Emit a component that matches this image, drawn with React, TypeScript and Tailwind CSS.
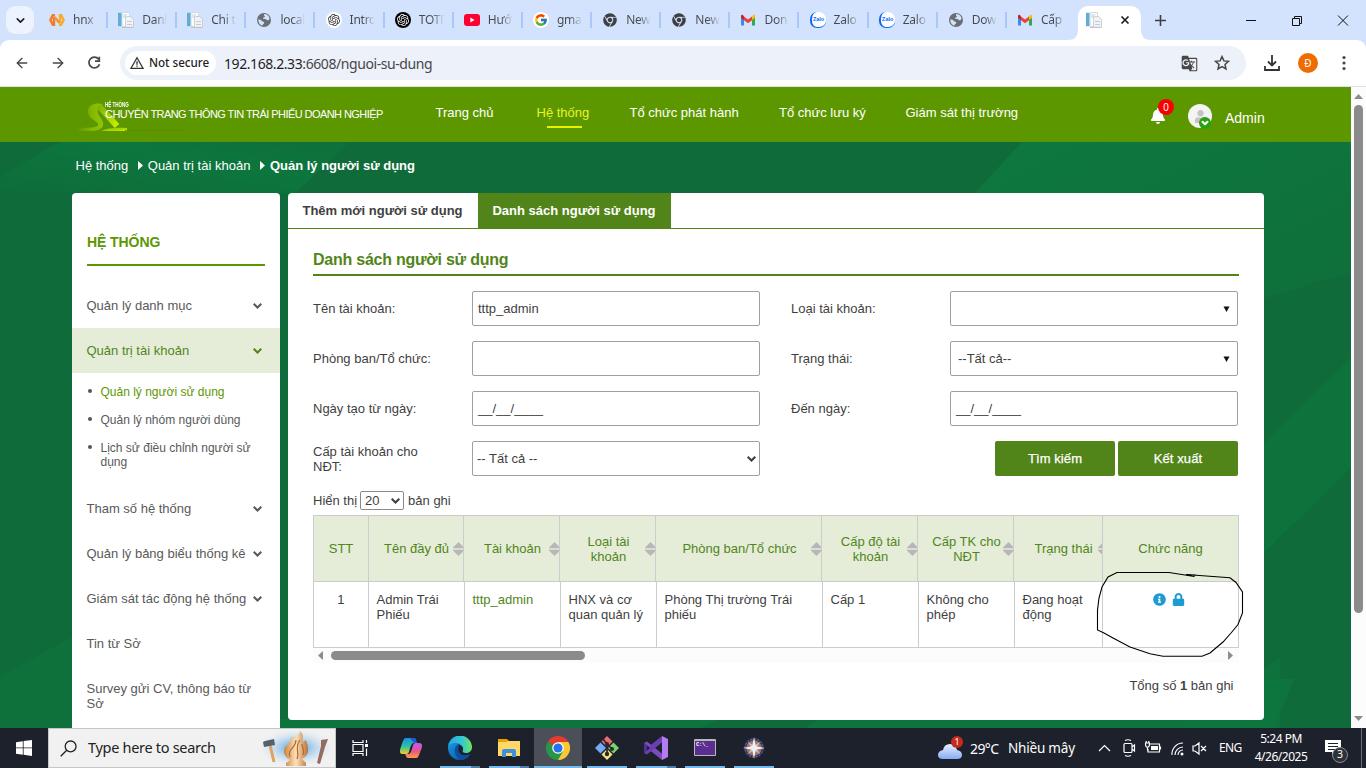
import type { ReactNode } from "react";
import { FcGoogle } from "react-icons/fc";
import { SiOpenai } from "react-icons/si";
import { FaInfoCircle, FaLock, FaBell, FaChrome, FaUser } from "react-icons/fa";
import { MdGTranslate } from "react-icons/md";
import { ChevronDown, ArrowLeft, ArrowRight } from "lucide-react";

function DocIcon() {
  return (
    <svg width="16" height="16" viewBox="0 0 16 16">
      <path d="M4 .5h7.500v14H4z" fill="#fbfcfd" stroke="#cdd3d8" strokeWidth=".8" />
      <path d="M0 .8h3.500v13.400H0z" fill="#62add6" />
      <path d="M5 3h4M5 5h2" stroke="#c3d3df" />
      <path d="M7.500 4.500h5l3 3v7.800h-8z" fill="#f1f3f4" stroke="#c0c6ca" strokeWidth=".8" />
      <path d="M9 9.500h5M9 12.500h5" stroke="#c6cbcf" />
      <path d="M4 15.500h11" stroke="#b8bdc1" strokeWidth=".8" />
    </svg>
  );
}

function HnxIcon() {
  return (
    <svg width="16" height="16" viewBox="0 0 16 16" fill="none" strokeWidth="2.400">
      <path d="M6 3.200H3.800L1.400 8l2.400 4.800H5V5" stroke="#f47b2a" />
      <path d="M10 12.800h2.200L14.600 8l-2.400-4.800H11V11" stroke="#fbab2c" />
      <path d="m5.500 5 5 6" stroke="#f7922b" />
    </svg>
  );
}

function GlobeIcon() {
  return (
    <svg width="16" height="16" viewBox="0 0 16 16">
      <circle cx="8" cy="8" r="7" fill="#6b6f73" />
      <path d="M2.300 7.600c1.600 0 2.500.2 3.700 1.400.7.800 2 .4 2.200 1.500.2 1-.8 1.400-1.400 2l-.5 1.200C3.700 13 2.300 10.500 2.300 7.600zM8 2.300h2.200c1.600.7 3 2.200 3.400 4.200-.5 1.500-1.200 2-2.400 1.700L9.500 7 7 6.800c0-1 .3-1.400 1.300-1.600 1-.2.700-1.400-.3-1.500z" fill="#d3e3fd" />
    </svg>
  );
}

function GmailIcon() {
  return (
    <svg width="16" height="16" viewBox="0 0 16 16">
      <path d="M1 4v9.500h3V7z" fill="#4285f4" />
      <path d="M15 4v9.500h-3V7z" fill="#34a853" />
      <path d="M12 4.500 13.200 3c1-.6 1.800.2 1.800 1.200v1.600l-3 2.300z" fill="#fbbc04" />
      <path d="M4 8.200V4.400l4 3 4-3v3.800l-4 3z" fill="#ea4335" />
      <path d="M1 5.800V4.200C1 3 2 2.400 2.800 3L4 4.300v3.800z" fill="#c5221f" />
    </svg>
  );
}

function ZaloIcon() {
  return (
    <span className="flex size-4 items-center justify-center rounded-[7px] border-b border-l-2 border-[#0d68f2] bg-white font-['Liberation_Sans'] text-[5.500px] font-bold text-[#0d68f2]">
      Zalo
    </span>
  );
}

function YoutubeIcon() {
  return (
    <svg width="16" height="16" viewBox="0 0 16 16">
      <rect y="2" width="16" height="12" rx="3" fill="#f03" />
      <path d="m6.300 5.500 4.200 2.500-4.200 2.500z" fill="#fff" />
    </svg>
  );
}

const doc = <DocIcon />;
const tabs: { icon: ReactNode; text: string }[] = [
  { icon: <HnxIcon />, text: "hnx ." },
  { icon: doc, text: "Danh" },
  { icon: doc, text: "Chi ti" },
  { icon: <GlobeIcon />, text: "local" },
  { icon: <span className="flex size-4 items-center justify-center rounded-full bg-white"><SiOpenai size={12} color="#333" /></span>, text: "Intro" },
  { icon: <span className="flex size-4 items-center justify-center rounded-full bg-black"><SiOpenai size={12} color="#fff" /></span>, text: "TOTP" },
  { icon: <YoutubeIcon />, text: "Hướ" },
  { icon: <span className="flex size-4 items-center justify-center rounded-full bg-white"><FcGoogle size={14} /></span>, text: "gmai" },
  { icon: <FaChrome size={14} color="#3c4043" />, text: "New" },
  { icon: <FaChrome size={14} color="#3c4043" />, text: "New" },
  { icon: <GmailIcon />, text: "Don" },
  { icon: <ZaloIcon />, text: "Zalo" },
  { icon: <ZaloIcon />, text: "Zalo" },
  { icon: <GlobeIcon />, text: "Dow" },
  { icon: <GmailIcon />, text: "Cấp" },
];

function TabStrip() {
  return (
    <div className="flex h-10 items-stretch bg-[#d3e3fd]">
      <div className="mt-1.5 ml-1.5 flex size-7 shrink-0 items-center justify-center rounded-[9px] bg-[#ecf3fe]">
        <ChevronDown size={13} strokeWidth={3} color="#1f1f1f" />
      </div>
      <div className="ml-[5px] flex">
        {tabs.map((t, i) => (
          <div key={i} className="flex w-[69.150px] shrink-0 items-center pl-[10px]">
            <span className="flex w-4 shrink-0 justify-center">{t.icon}</span>
            <span className="ml-2 w-[25px] shrink-0 overflow-hidden bg-linear-to-r from-[#45494d] from-50% to-[#d3e3fd] bg-clip-text text-[12px] tracking-[-0.250px] whitespace-nowrap text-transparent">
              {t.text}
            </span>
            {i < tabs.length - 1 && <span className="ml-[8px] h-4 w-0.5 shrink-0 bg-[#a8c7fa]" />}
          </div>
        ))}
      </div>
      <svg width="10" height="40" viewBox="0 0 10 40" className="-ml-[8px] shrink-0">
        <path d="M0 40h10V30q0 10-10 10z" fill="#fff" />
      </svg>
      <div className="mt-1.5 flex w-[63px] shrink-0 items-center rounded-t-[10px] bg-white pb-1.5 pl-2">
        {doc}
        <svg width="10" height="10" viewBox="0 0 10 10" className="ml-[18px]">
          <path d="m1.500 1.500 7 7m0-7-7 7" stroke="#1f1f1f" strokeWidth="1.700" />
        </svg>
      </div>
      <svg width="10" height="40" viewBox="0 0 10 40" className="shrink-0">
        <path d="M0 30v10h10Q0 40 0 30z" fill="#fff" />
      </svg>
      <div className="flex flex-1 items-center pl-[4px]">
        <svg width="11" height="11" viewBox="0 0 11 11">
          <path d="M5.500 0v11M0 5.500h11" stroke="#3c4043" strokeWidth="1.600" />
        </svg>
        <svg width="103" height="11" viewBox="0 0 103 11" className="mr-[17px] ml-auto shrink-0" fill="none" stroke="#111" strokeWidth="1">
          <path d="M0 5.500h10M46.500 3.500h7v7h-7zM48.500 3.500v-2h7v7h-2M92 .5l10 10m0-10-10 10" />
        </svg>
      </div>
    </div>
  );
}

function Toolbar() {
  return (
    <div className="bg-[#d3e3fd]">
      <div className="flex h-[47px] items-center rounded-t-[9px] border-b border-[#dfe1e5] bg-white">
        <ArrowLeft size={16} strokeWidth={2} color="#474747" className="ml-[14px]" />
        <ArrowRight size={16} strokeWidth={2} color="#474747" className="ml-[20px]" />
        <svg width="16" height="16" viewBox="0 0 16 16" className="ml-[20px]" fill="none" stroke="#474747" strokeWidth="1.700">
          <path d="M12.600 4.200a5.400 5.400 0 1 0 .9 5M13.300 1.800v4.300H9" />
        </svg>
        <div className="ml-[18px] flex h-[34px] w-[1126px] items-center rounded-full bg-[#edf1fa] pl-[5px]">
          <div className="flex h-6 w-[91px] items-center rounded-full bg-white pl-[5px]">
            <svg width="14" height="14" viewBox="0 0 14 14" fill="none" stroke="#333" strokeWidth="1.300">
              <path d="M7 1.700 13 12.300H1zM7 5.200v3.500M7 9.500v1.300" />
            </svg>
            <span className="ml-[5px] text-[11.700px] font-medium tracking-[-0.050px] whitespace-nowrap text-[#1f1f1f]">Not secure</span>
          </div>
          <span className="ml-[8px] text-[14px] tracking-[-0.420px] text-[#474747]">
            <span className="text-[#1f1f1f]">192.168.2.33</span>:6608/nguoi-su-dung
          </span>
          <MdGTranslate size={17} color="#474747" className="ml-auto" />
          <svg width="16" height="16" viewBox="0 0 16 16" className="mr-4 ml-4" fill="none" stroke="#474747" strokeWidth="1.500">
            <path d="m8 1.600 1.900 4.300 4.600.4-3.500 3.100 1 4.600L8 11.600l-4 2.400 1-4.600L1.500 6.300l4.600-.4z" />
          </svg>
        </div>
        <svg width="16" height="16" viewBox="0 0 16 16" className="ml-[18px]" fill="none" stroke="#333" strokeWidth="1.800">
          <path d="M8 0v10M4 6.500 8 10.500l4-4M1 11v4h14v-4" />
        </svg>
        <span className="ml-[18px] flex size-5 items-center justify-center rounded-full bg-[#ef6c00] text-[10px] text-white">Đ</span>
        <svg width="4" height="16" viewBox="0 0 4 16" className="ml-6" fill="#474747">
          <circle cx="2" cy="2.500" r="1.600" /><circle cx="2" cy="8" r="1.600" /><circle cx="2" cy="13.500" r="1.600" />
        </svg>
      </div>
    </div>
  );
}

function SiteHeader() {
  return (
    <header className="flex h-[55px] shrink-0 border-b border-[#5a9110] bg-[#5d9700] text-[13px] text-white">
      <div className="relative ml-[75px] w-[360.500px]">
        <svg width="112" height="30" viewBox="0 0 112 30" className="absolute top-[16px] left-0" fill="none">
          <defs>
            <linearGradient id="sweep" x1="0" x2="1"><stop stopColor="#5d9700" /><stop offset=".6" stopColor="#86b900" /><stop offset="1" stopColor="#8fc40a" /></linearGradient>
            <linearGradient id="tail" x1="0" x2="1" y1="0" y2="1"><stop stopColor="#7fb400" /><stop offset="1" stopColor="#c8ee00" /></linearGradient>
          </defs>
          <path d="M28 1C20-1 12 2 13 9c1 7 9 9 10 12 1 4-8 4-21 4v3h12c9 0 15-2 14-8-1-5-7-9-5-14 1-2 3-3 5-5z" fill="url(#sweep)" />
          <path d="m24 3 18 20" stroke="url(#tail)" strokeWidth="6" />
          <path d="M26 28c5-3 14-4 26-3v3z" fill="url(#tail)" />
          <path d="M50 27.500h60" stroke="#548e00" strokeWidth=".7" />
        </svg>
        <span className="absolute top-[13px] left-[30px] origin-left scale-x-[0.600] text-[7.500px] leading-[10px] font-bold whitespace-nowrap">HỆ THỐNG</span>
        <span className="absolute top-[20px] left-[30px] text-[11px] leading-[14px] tracking-[-0.560px] whitespace-nowrap">CHUYÊN TRANG THÔNG TIN TRÁI PHIẾU DOANH NGHIỆP</span>
      </div>
      <nav className="flex pt-[17px] leading-[17px] whitespace-nowrap">
        <a className="w-[101px]">Trang chủ</a>
        <a className="flex w-[93px] flex-col items-start text-[#e5f52a]">
          Hệ thống
          <span className="mt-[5px] ml-[10px] h-[2px] w-[35px] bg-[#e8f200]" />
        </a>
        <a className="w-[149.500px]">Tổ chức phát hành</a>
        <a className="w-[126.500px]">Tổ chức lưu ký</a>
        <a className="w-[113px]">Giám sát thị trường</a>
      </nav>
      <div className="relative mt-[21px] ml-[131px] h-4 w-4">
        <FaBell size={16} color="#fff" />
        <span className="absolute -top-[9px] left-[8.500px] flex size-4 items-center justify-center rounded-full bg-[#fb0000] text-[10px]">0</span>
      </div>
      <div className="relative mt-[17px] ml-[22.500px] size-6">
        <div className="flex size-6 items-center justify-center overflow-hidden rounded-full bg-[#f4f4f4]">
          <FaUser size={13} color="#c4c4c4" />
        </div>
        <span className="absolute top-[13px] left-[11px] flex size-3 items-center justify-center rounded-full bg-[#2ba015]">
          <ChevronDown size={10} strokeWidth={5} color="#fff" />
        </span>
      </div>
      <span className="mt-[23px] ml-[13px] text-[14px] leading-[17px]">Admin</span>
    </header>
  );
}

function Chevron() {
  return (
    <svg width="9" height="6" viewBox="0 0 9 6" fill="none" stroke="currentColor" strokeWidth="2.100">
      <path d="m.7.8 3.800 3.700L8.300.8" />
    </svg>
  );
}

function MenuItem({ text, arrow = false, active = false }: { text: string; arrow?: boolean; active?: boolean }) {
  return (
    <div className={`flex h-[45px] shrink-0 items-center justify-between pr-[18px] pl-[14.500px] ${active ? "bg-[#e5edd9] text-[#528519]" : ""}`}>
      <span className="whitespace-nowrap">{text}</span>
      {arrow && <Chevron />}
    </div>
  );
}

function SubItem({ text, active = false }: { text: string; active?: boolean }) {
  return (
    <li className="flex">
      <span className="mt-[4px] mr-[8.500px] ml-[1.500px] size-1 shrink-0 rounded-full bg-[#555]" />
      <span className={active ? "text-[#5d9700]" : ""}>{text}</span>
    </li>
  );
}

function Sidebar() {
  return (
    <aside className="flex w-[208px] shrink-0 flex-col overflow-hidden rounded-t bg-white text-[13px] leading-[15px] text-[#595959]">
      <div className="mx-[15px] mt-[40px] mb-[17px] flex h-[33px] shrink-0 items-start border-b-2 border-[#5d9700] pt-[1px] text-[14px] leading-[17px] font-bold tracking-[-0.080px] text-[#5d9700]">HỆ THỐNG</div>
      <MenuItem text="Quản lý danh mục" arrow />
      <MenuItem text="Quản trị tài khoản" arrow active />
      <ul className="flex h-[113px] shrink-0 flex-col gap-[14px] pt-[12px] pr-[20px] pl-[14.500px] text-[12px] leading-[14px]">
        <SubItem text="Quản lý người sử dụng" active />
        <SubItem text="Quản lý nhóm người dùng" />
        <SubItem text="Lịch sử điều chỉnh người sử dụng" />
      </ul>
      <MenuItem text="Tham số hệ thống" arrow />
      <MenuItem text="Quản lý bảng biểu thống kê" arrow />
      <MenuItem text="Giám sát tác động hệ thống" arrow />
      <MenuItem text="Tin từ Sở" />
      <div className="pt-[15px] pr-[20px] pl-[14.500px]">Survey gửi CV, thông báo từ Sở</div>
    </aside>
  );
}

function Field({ label, children }: { label: string; children?: ReactNode }) {
  return (
    <div className="flex h-[35px] items-center">
      <span className="w-[159px] shrink-0 pr-[38px]">{label}</span>
      <div className="flex h-[35px] w-[288px] items-center rounded-[2px] border border-[#a0a0a0] px-[5px]">{children}</div>
    </div>
  );
}

function Triangle() {
  return (
    <svg width="7" height="6" viewBox="0 0 7 6" className="mr-[2.500px] ml-auto"><path d="M.5.500h6L3.500 6z" fill="#111" /></svg>
  );
}

function SortIcon() {
  return (
    <svg width="11" height="14" viewBox="0 0 11 14" fill="#b7b7b7" className="-mr-px shrink-0">
      <path d="M5.500 0 11 5.500v.8H0v-.8zM0 7.700h11v.8L5.500 14 0 8.500z" />
    </svg>
  );
}

function HeadCell({ text, className, sort = true }: { text: string; className: string; sort?: boolean }) {
  return (
    <div className={`flex shrink-0 items-center overflow-hidden border-r border-[#ccc] ${className}`}>
      <span className="flex-1 text-center">{text}</span>
      {sort && <SortIcon />}
    </div>
  );
}

function Grid() {
  return (
    <div className="mt-[5px] w-[926px]">
      <div className="flex h-[67px] border border-r-0 border-[#ccc] bg-[#e5edd9] text-[#528519]">
        <HeadCell text="STT" className="w-[55px]" sort={false} />
        <HeadCell text="Tên đầy đủ" className="w-[95px] pl-[11px]" />
        <HeadCell text="Tài khoản" className="w-[96px] pl-[12px]" />
        <HeadCell text="Loại tài khoản" className="w-[96px] pl-[12px] [&>span]:px-3" />
        <HeadCell text="Phòng ban/Tổ chức" className="w-[166px] pl-[12px]" />
        <HeadCell text="Cấp độ tài khoản" className="w-[96px] pl-[12px] [&>span]:px-1" />
        <HeadCell text="Cấp TK cho NĐT" className="w-[96px] pl-[12px]" />
        <HeadCell text="Trạng thái" className="w-[89px] pl-[13px] [&>span]:-mr-0.5 [&>span]:whitespace-nowrap [&>svg]:-mr-[7px]" />
        <HeadCell text="Chức năng" className="w-[136px]" sort={false} />
      </div>
      <div className="flex h-[66px] border-b border-l border-[#ccc] *:shrink-0 *:border-r *:border-[#ccc] *:pt-[10px] *:pl-[7.500px]">
        <div className="w-[55px] pr-[8px] text-center">1</div>
        <div className="w-[96px]">Admin Trái Phiếu</div>
        <div className="w-[96px] text-[#528519]">tttp_admin</div>
        <div className="w-[96px]">HNX và cơ quan quản lý</div>
        <div className="w-[166px] pr-4">Phòng Thị trường Trái phiếu</div>
        <div className="w-[96px]">Cấp 1</div>
        <div className="w-[96px] pr-4">Không cho phép</div>
        <div className="w-[88px] pr-4">Đang hoạt động</div>
        <div className="flex w-[136px] gap-[6px] text-[#1e9bd1]">
          <FaInfoCircle size={13} className="mt-px ml-[42.500px]" />
          <FaLock size={13} className="mt-px" />
        </div>
      </div>
      <div className="flex h-[15px] items-center bg-[#fcfcfc] pl-[5px]">
        <svg width="5" height="9" viewBox="0 0 5 9"><path d="M5 0v9L0 4.500z" fill="#8b8b8b" /></svg>
        <div className="ml-[8px] h-[9px] w-[254px] rounded-full bg-[#8b8b8b]" />
        <svg width="5" height="9" viewBox="0 0 5 9" className="mr-[6px] ml-auto"><path d="M0 0v9l5-4.500z" fill="#8b8b8b" /></svg>
      </div>
    </div>
  );
}

function MainPanel() {
  return (
    <main className="flex h-[527px] w-[976px] shrink-0 flex-col rounded bg-white">
      <div className="flex h-[36px] border-b border-[#528519] text-[13px] leading-[35px] font-bold">
        <div className="w-[190px] pr-px text-center whitespace-nowrap">Thêm mới người sử dụng</div>
        <div className="w-[193px] bg-[#528519] pr-px text-center whitespace-nowrap text-white">Danh sách người sử dụng</div>
      </div>
      <div className="pl-[25px]">
        <h1 className="mt-[20px] h-[27px] w-[926px] border-b-2 border-[#528519] pt-px text-[16px] leading-[19px] font-bold tracking-[-0.240px] text-[#528519]">Danh sách người sử dụng</h1>
        <div className="mt-[15px] grid w-[925px] grid-cols-[447px_447px] gap-x-[31px] gap-y-[15px]">
          <Field label="Tên tài khoản:">tttp_admin</Field>
          <Field label="Loại tài khoản:"><Triangle /></Field>
          <Field label="Phòng ban/Tổ chức:" />
          <Field label="Trạng thái:"><span className="pl-[2px]">--Tất cả--</span><Triangle /></Field>
          <Field label="Ngày tạo từ ngày:">__/__/____</Field>
          <Field label="Đến ngày:">__/__/____</Field>
          <Field label="Cấp tài khoản cho NĐT:">
            <span className="-ml-px">-- Tất cả --</span>
            <span className="-mr-[2px] ml-auto"><Chevron /></span>
          </Field>
          <div className="flex justify-end gap-[3px] text-white">
            <button className="h-[35px] w-[120px] rounded-[2px] bg-[#528519] tracking-[0.100px] [-webkit-text-stroke:0.25px_white]">Tìm kiếm</button>
            <button className="h-[35px] w-[120px] rounded-[2px] bg-[#528519] tracking-[0.100px] [-webkit-text-stroke:0.25px_white]">Kết xuất</button>
          </div>
        </div>
        <div className="mt-[15px] flex h-[19px] items-center">
          Hiển thị
          <span className="mr-1 ml-[3px] flex h-[19px] w-[44px] items-center justify-between rounded-[2px] border border-[#8a8a8a] pr-[3px] pl-[4px]">20<Chevron /></span>
          bản ghi
        </div>
        <Grid />
        <div className="mt-[15px] w-[920.500px] text-right">Tổng số <b>1</b> bản ghi</div>
      </div>
    </main>
  );
}

function Backdrop() {
  return (
    <svg width="1351" height="641" viewBox="0 0 1351 641" className="absolute inset-0 -z-10">
      <defs>
        <linearGradient id="bandA" x1="0" x2="1" y1="0" y2="1"><stop stopColor="#0d783f" /><stop offset="1" stopColor="#0f6e3b" /></linearGradient>
        <linearGradient id="bandB" x1="0" x2="1" y1="1" y2="0"><stop stopColor="#0f6c3a" /><stop offset=".6" stopColor="#0c763e" /><stop offset="1" stopColor="#0f6f3b" /></linearGradient>
      </defs>
      <rect width="1351" height="641" fill="#0f6c3a" />
      <path d="M60 55h290l-55 51H0V90z" fill="url(#bandB)" />
      <path d="M0 641V590l72-40v91z" fill="#0d743d" opacity=".6" />
      <path d="M1022 55h329v130l-200 60V106H975z" fill="url(#bandA)" />
      <path d="m1351 270-91 90v110l91-90zM1180 641l100-70v70z" fill="#0d743d" opacity=".8" />
      <path d="M280 641v-9h440l-20 9zM820 632h444v-40h30l-20 49H805z" fill="#0d773f" opacity=".8" />
    </svg>
  );
}

function Crumb({ text }: { text: string }) {
  return (
    <>
      {text}
      <svg width="5" height="9" viewBox="0 0 5 9" className="mr-[5px] ml-[9.500px]"><path d="M0 0v9l5-4.500z" fill="#fff" /></svg>
    </>
  );
}

function Taskbar() {
  return (
    <footer className="flex h-10 bg-[#1c212b] text-white">
      <div className="flex w-12 items-center justify-center">
        <svg width="16" height="16" viewBox="0 0 16 16" fill="#fff"><path d="M0 2.200 6.800 1.200v6.300H0zM7.600 1.100 16 0v7.500H7.600zM0 8.300h6.800v6.400L0 13.700zM7.600 8.300H16V16l-8.400-1.200z" /></svg>
      </div>
      <div className="flex w-[288px] items-center border border-[#c6c6c6] bg-[#f1f1f1] pl-[11px] text-[#222]">
        <svg width="17" height="17" viewBox="0 0 17 17" fill="none" stroke="#222" strokeWidth="1.300"><circle cx="10.600" cy="6.400" r="5.400" /><path d="m6.700 10.300-6 6" /></svg>
        <span className="ml-[11px] text-[14.500px] tracking-[-0.300px] whitespace-nowrap">Type here to search</span>
        <svg width="80" height="38" viewBox="0 0 80 38" className="ml-auto">
          <defs>
            <radialGradient id="glow"><stop offset=".3" stopColor="#8fc3ea" /><stop offset="1" stopColor="#f1f1f1" stopOpacity="0" /></radialGradient>
            <linearGradient id="wood"><stop stopColor="#c8843f" /><stop offset=".5" stopColor="#ffe1b8" /><stop offset="1" stopColor="#b7713a" /></linearGradient>
          </defs>
          <ellipse cx="41" cy="19" rx="40" ry="20" fill="url(#glow)" />
          <path d="m15 16 4 17" stroke="#dda35e" strokeWidth="3" />
          <path d="m8 13 2-1 9-2 1 6-11 2z" fill="#58606f" />
          <path d="M31 37v-3l4-3c-7-4-8-11-3-15 4-3 3-6 6-9l2 3c2-3 4-4 5-8 5 4 2 8 3 11l3-2c2 7 5 14-4 19l4 4v3z" fill="url(#wood)" />
          <path d="M35 28c-3-9 6-8 6-17M42 30c3-7-3-11 3-19M48 26c2-5-1-7-1-11" stroke="#b06a30" fill="none" strokeWidth="1.200" />
          <path d="m66 11 7-1-3 8-5 17-3-1 4-17z" fill="#956b60" />
        </svg>
      </div>
      <div className="mr-[3px] flex w-12 items-center justify-center">
        <svg width="17" height="16" viewBox="0 0 17 16" fill="none" stroke="#fff" strokeWidth="1.200"><path d="M1 0v2.500h10V0M1 4.500h10v7H1zM1 16v-2.500h10V16M14.500 0v3M14.500 8.500V16" /><path d="M13 4h3v3h-3z" fill="#fff" stroke="none" /></svg>
      </div>
      <div className="mr-px flex w-12 items-center justify-center">
        <svg width="22" height="21" viewBox="0 0 22 21">
          <defs>
            <linearGradient id="cpA" x1="0" x2="0" y1="0" y2="1"><stop stopColor="#178fe8" /><stop offset=".5" stopColor="#28c2a0" /><stop offset="1" stopColor="#f2cb2e" /></linearGradient>
            <linearGradient id="cpB" x1="0" x2="0" y1="0" y2="1"><stop stopColor="#b65cf3" /><stop offset=".55" stopColor="#ef5487" /><stop offset="1" stopColor="#fb9f3e" /></linearGradient>
          </defs>
          <path d="M6 0h8c2 0 2 3 3 5h-3c-2 0-3 2-4 5l-1 4c-1 2-2 2-4 2H3c-5 0-3-5 0-13 1-2 1-3 3-3z" fill="url(#cpA)" />
          <path d="M16 20H8c-2 0-2-3-3-4h3c2 0 3-2 4-5l1-4c1-2 2-2 4-2h2c5 0 3 5 0 12-1 2-1 3-3 3z" fill="url(#cpB)" />
          <path d="M10 0h4c2 0 2 3 3 5h-3z" fill="#2457d6" />
        </svg>
      </div>
      <div className="flex gap-px">
        <Task split>
          <svg width="24" height="24" viewBox="0 0 24 24">
            <defs>
              <linearGradient id="edA" x1="0" x2="1"><stop stopColor="#23a7e6" /><stop offset=".6" stopColor="#35c8d0" /><stop offset="1" stopColor="#70e659" /></linearGradient>
              <linearGradient id="edB" x1="0" x2="1" y1="0" y2="1"><stop stopColor="#1794df" /><stop offset="1" stopColor="#0b52a5" /></linearGradient>
            </defs>
            <path d="M0 12a12 12 0 0 1 24-1c0 4-3 6-6 6-3 0-4-1-3-3 1-5-5-7-9-5-3 1-5 2-6 3z" fill="url(#edA)" />
            <path d="M0 12c1-5 8-6 12-4-4 2-4 6-2 9 3 4 8 3 12 1-2 4-6 6-10 6A12 12 0 0 1 0 12z" fill="url(#edB)" />
            <path d="M12 8c-6 0-8 10 0 16 4 0 8-2 10-6-4 2-9 2-11-2-1-3-1-5 1-8z" fill="#0c4f9f" />
          </svg>
        </Task>
        <Task split>
          <svg width="22" height="18" viewBox="0 0 22 18"><path d="M0 0h9l2 2h10v15H0z" fill="#e7a300" /><path d="M0 3h8l2-1h12v15H0z" fill="#ffd867" /><path d="M4 18v-6q0-2 2-2h10q2 0 2 2v6h-4v-4H8v4z" fill="#3b92da" /></svg>
        </Task>
        <Task active>
          <svg width="24" height="24" viewBox="0 0 24 24">
            <path d="M12 12 1.600 6A12 12 0 0 1 22.400 6z" fill="#e33b2e" />
            <path d="M12 12 1.600 6A12 12 0 0 0 12 24z" fill="#27964a" />
            <path d="M12 12h0l0 12A12 12 0 0 0 22.400 6H12z" fill="#fcc934" />
            <path d="M6.800 15 1.600 6 6.800 9zM17.200 15 12 24l-2-6z" fill="#27964a" />
            <circle cx="12" cy="12" r="5.800" fill="#fff" /><circle cx="12" cy="12" r="4.600" fill="#2374e8" />
          </svg>
        </Task>
        <Task>
          <svg width="24" height="24" viewBox="0 0 24 24">
            <path d="m12 0 5.500 5.500L12 11 6.500 5.500z" fill="#ef6a72" /><path d="m5.500 6.500 5.500 5.500-5.500 5.500L0 12z" fill="#75aaf6" /><path d="M18.500 6.500 24 12l-5.500 5.500L13 12z" fill="#7dd16b" /><path d="m12 13 5.500 5.500L12 24l-5.500-5.500z" fill="#f8e17b" />
            <path d="M8 3 12 8v10M12 8l5 5" stroke="#26292e" strokeWidth="1.700" fill="none" /><circle cx="12" cy="8" r="2" fill="#26292e" /><circle cx="12" cy="18" r="2.200" fill="#26292e" /><circle cx="17" cy="13" r="2" fill="#26292e" />
          </svg>
        </Task>
        <Task split>
          <svg width="24" height="24" viewBox="0 0 24 24">
            <path d="M0 7 3 5.500 18 17.500V24L3 12z" fill="#7a4cc0" />
            <path d="M0 7v10l3 1.500L18 6.500V0L3 12z" fill="#6a40b0" />
            <path d="M0 7v10l3-2V9z" fill="#52309a" />
            <path d="m18 0 6 3v18l-6 3z" fill="#b47cf0" />
            <path d="M18 7 11.500 12l6.500 5z" fill="#1c212b" /><path d="m3 9.500 3 2.500-3 2.500z" fill="#1c212b" />
          </svg>
        </Task>
        <Task>
          <span className="flex h-[17px] w-[22px] rounded-[1px] border border-t-2 border-[#b8b8b8] bg-[#5a2d91] pl-px font-['Liberation_Mono'] text-[5.500px] leading-[8px] font-bold tracking-[-0.300px]">C:\_</span>
        </Task>
        <Task>
          <svg width="24" height="24" viewBox="0 0 24 24"><circle cx="12" cy="12" r="9" fill="#a9705e" stroke="#25305f" strokeWidth="2.500" /><circle cx="12" cy="12" r="9" fill="none" stroke="#8b91a8" strokeWidth=".8" strokeDasharray="2 1.500" /><path d="m6 6 5 3h2l5-3-3 5v2l3 5-5-3h-2l-5 3 3-5v-2z" fill="#bcc2cc" /><path d="m12 1 1.800 9.200L23 12l-9.200 1.800L12 23l-1.800-9.200L1 12l9.200-1.800z" fill="#eef0f2" /></svg>
        </Task>
      </div>
      <div className="ml-auto flex items-center">
        <div className="relative mr-[7px] h-[24px] w-[25px]">
          <svg width="25" height="24" viewBox="0 0 25 24" className="absolute inset-0"><defs><linearGradient id="cl" x1="0" x2="0" y1="0" y2="1"><stop stopColor="#e7f1ff" /><stop offset="1" stopColor="#86acf4" /></linearGradient></defs><path d="M5 23q-5 0-5-4t5-5q1-6 7-6t7 6q5 1 5 5t-5 4z" fill="url(#cl)" /></svg>
          <span className="absolute top-0 left-[13px] flex size-3 items-center justify-center rounded-full bg-[#c42b1c] text-[9px]">1</span>
        </div>
        <span className="w-[38px] text-[14px] tracking-[-0.600px] whitespace-nowrap">29°C</span>
        <span className="w-[67px] text-[13.500px] tracking-[-0.200px] whitespace-nowrap">Nhiều mây</span>
        <svg width="110" height="18" viewBox="0 0 110 18" className="ml-[23px]" fill="none" stroke="#fff" strokeWidth="1.200">
          <path d="m1 12 5.500-5.500L12 12" />
          <path d="M27 4.500h6q1 0 1 1v7q0 1-1 1h-6q-1 0-1-1v-7q0-1 1-1zM34 8l2.500-2v6L34 10M27 1.500q3-1.500 6 0M27 16.500q3 1.500 6 0" />
          <path d="M52 5h9.500v8H50v-3M62.500 7.500v3M47 4h5M48.200 2v2M50.800 2v2M47.500 4.500c0 5 4 5 4 0M49.500 8.500v3" /><path d="M53 7h7v4h-7z" fill="#fff" stroke="none" />
          <path d="M74 16A11 11 0 0 1 85 4M77 16a8 8 0 0 1 8-8M80 16a5 5 0 0 1 5-5" strokeWidth="1.100" /><circle cx="84" cy="15" r="1.500" fill="#fff" stroke="none" />
          <path d="M95 7h2l4-3v11l-4-3h-2zM103 7l5 5m0-5-5 5" />
        </svg>
        <span className="ml-[11px] w-[23px] text-[12px] tracking-[-0.600px]">ENG</span>
        <div className="ml-[8px] w-[62px] text-center text-[12px] leading-[18px] tracking-[-0.480px] whitespace-nowrap">5:24 PM<br />4/26/2025</div>
        <div className="relative mr-[12px] ml-[13px] h-6 w-[24px]">
          <svg width="17" height="16" viewBox="0 0 17 16" className="absolute top-[4px] left-0"><path d="M0 0h16v12h-6l-3 3v-3H0z" fill="#fff" /><path d="M3 3.500h10M3 6.500h10M3 9.500h7" stroke="#1c212b" /></svg>
          <span className="absolute top-[11px] left-[7px] flex size-4 items-center justify-center rounded-full border border-[#8a8d92] bg-[#2e3138] text-[10.500px]">3</span>
        </div>
        <span className="mr-[4px] h-10 w-px bg-[#6b6e75]" />
      </div>
    </footer>
  );
}

function Task({ children, active = false, split = false }: { children: ReactNode; active?: boolean; split?: boolean }) {
  return (
    <div className={`flex h-10 w-12 flex-col items-center ${active ? "bg-[#4b5058]" : ""}`}>
      <div className="flex h-[38px] items-center pt-px">{children}</div>
      <div className={`flex h-0.5 shrink-0 justify-end bg-[#76b9ed] ${active ? "w-12" : "w-10"}`}>
        {split && <span className="h-0.5 w-[9px] bg-[#4f7ea4]" />}
      </div>
    </div>
  );
}

export default function App() {
  return (
    <div className="relative flex h-[768px] w-[1366px] flex-col overflow-hidden bg-white font-['Noto_Sans',sans-serif]">
      <TabStrip />
      <Toolbar />
      <div className="flex h-[641px] font-['Liberation_Sans',sans-serif] text-[13px] leading-[15px] text-[#3f3f3f]">
        <div className="relative isolate flex w-[1351px] flex-col overflow-hidden">
          <Backdrop />
          <SiteHeader />
          <div className="flex h-[51px] shrink-0 items-center pb-[5px] pl-[75.500px] text-white">
            <Crumb text="Hệ thống" />
            <Crumb text="Quản trị tài khoản" />
            <b>Quản lý người sử dụng</b>
          </div>
          <div className="flex min-h-0 flex-1 gap-2 pl-[72px]">
            <Sidebar />
            <MainPanel />
          </div>
        </div>
        <div className="flex w-[15px] flex-col items-center bg-[#fcfcfc]">
          <svg width="9" height="5" viewBox="0 0 9 5" className="mt-[7px]"><path d="M0 5h9L4.500 0z" fill="#8b8b8b" /></svg>
          <div className="mt-[6px] h-[508px] w-[9px] rounded-full bg-[#8b8b8b]" />
          <svg width="9" height="5" viewBox="0 0 9 5" className="mt-auto mb-[7px]"><path d="M0 0h9L4.500 5z" fill="#8b8b8b" /></svg>
        </div>
      </div>
      <Taskbar />
      <svg width="150" height="90" viewBox="1095 570 150 90" className="pointer-events-none absolute top-[570px] left-[1095px]" fill="none" stroke="#000" strokeWidth="1.100">
        <path d="M1097.500 630V610L1099 598 1102 587 1108 577 1117 572.500H1169L1185 575 1194 576.500 1195 575 1186 574.500 1213 576.500 1230 577.700 1236 582.500 1242.500 592V613L1238 624.500 1231 633 1223 642 1210 653 1202 656.300H1163L1150 653.700 1130 647 1113 638 1104 633Z" />
      </svg>
    </div>
  );
}
